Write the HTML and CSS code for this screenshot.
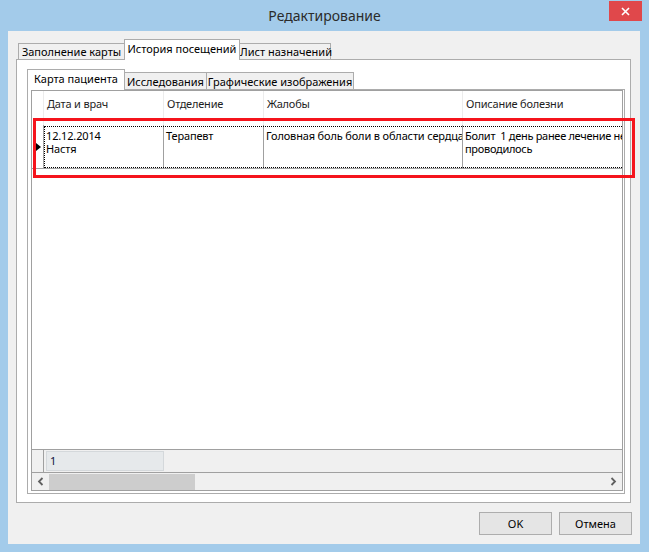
FILE: index.html
```html
<!DOCTYPE html>
<html lang="ru">
<head>
<meta charset="utf-8">
<title>Редактирование</title>
<link rel="stylesheet" href="styles.css">
</head>
<body>
<div class="window">
  <div class="titlebar">
    <span class="title">Редактирование</span>
    <div class="close">
      <svg width="9" height="9" viewBox="0 0 9 9"><path d="M1 1 L8 8 M8 1 L1 8" stroke="#fff" stroke-width="1.6" fill="none"/></svg>
    </div>
  </div>
  <div class="client">
    <div class="tabctl outer">
      <div class="tabstrip">
        <div class="tab t1">Заполнение карты</div>
        <div class="tab active t2">История посещений</div>
        <div class="tab t3">Лист назначений</div>
      </div>
      <div class="panel outer-panel">
        <div class="tabctl inner">
          <div class="tabstrip">
            <div class="tab active i1">Карта пациента</div>
            <div class="tab i2">Исследования</div>
            <div class="tab i3">Графические изображения</div>
          </div>
          <div class="panel inner-panel">
            <div class="grid">
              <div class="hrow">
                <div class="rh"></div>
                <div class="hc c1">Дата и врач</div>
                <div class="hc c2">Отделение</div>
                <div class="hc c3">Жалобы</div>
                <div class="hc c4">Описание болезни</div>
              </div>
              <div class="drow">
                <div class="rh"><span class="arrow"></span></div>
                <div class="cells">
                  <div class="dc c1">12.12.2014<br>Настя</div>
                  <div class="dc c2">Терапевт</div>
                  <div class="dc c3">Головная боль боли в области сердца</div>
                  <div class="dc c4"><span class="nw">Болит&nbsp; 1 день ранее лечение не</span><br>проводилось</div>
                </div>
              </div>
              <div class="gbody"></div>
              <div class="frow">
                <div class="rh"></div>
                <div class="fbox">1</div>
              </div>
              <div class="hscroll">
                <div class="sarrow">
                  <svg width="7" height="9" viewBox="0 0 7 9"><path d="M5.5 1 L2 4.5 L5.5 8" stroke="#606060" stroke-width="1.8" fill="none"/></svg>
                </div>
                <div class="thumb"></div>
                <div class="strack"></div>
                <div class="sarrow">
                  <svg width="7" height="9" viewBox="0 0 7 9"><path d="M1.5 1 L5 4.5 L1.5 8" stroke="#606060" stroke-width="1.8" fill="none"/></svg>
                </div>
              </div>
            </div>
          </div>
        </div>
      </div>
    </div>
    <div class="buttons">
      <div class="btn">OK</div>
      <div class="btn">Отмена</div>
    </div>
  </div>
  <div class="highlight"></div>
</div>
</body>
</html>
```

FILE: styles.css
```css
* { box-sizing: border-box; }

html, body {
  margin: 0;
  padding: 0;
}

body {
  font-family: "Noto Sans", "Segoe UI", sans-serif;
  font-size: 11px;
  color: #000;
  background: #a3cbea;
}

.window {
  width: 649px;
  height: 552px;
  background: #a3cbea;
  display: flex;
  flex-direction: column;
  position: relative;
  overflow: hidden;
}

.titlebar {
  height: 31px;
  display: grid;
  grid-template-columns: 1fr auto 1fr;
}

.title {
  grid-column: 2;
  font-size: 14px;
  color: #2b2b2b;
  line-height: 20px;
  padding-top: 6px;
}

.close {
  grid-column: 3;
  justify-self: end;
  align-self: start;
  margin-top: 1px;
  margin-right: 7px;
  width: 33px;
  height: 20px;
  background: #e0484b;
  display: flex;
  align-items: center;
  justify-content: center;
}

.client {
  flex: 1;
  margin: 0 9px 8px 8px;
  background: #f0f0f0;
  padding: 8px 8px 9px 8px;
  display: flex;
  flex-direction: column;
}

.tabctl {
  display: flex;
  flex-direction: column;
}

.tabctl.outer {
  height: 464px;
  margin-right: 1px;
}

.tabstrip {
  height: 20px;
  display: flex;
  align-items: flex-end;
  position: relative;
  z-index: 2;
}

.outer > .tabstrip { padding-left: 2px; }

.tab {
  border: 1px solid #acacac;
  border-bottom: none;
  background: #f0f0f0;
  text-align: center;
  white-space: nowrap;
  margin-left: -1px;
  color: #000;
}

.tab:first-child { margin-left: 0; }

.outer > .tabstrip > .tab {
  height: 16px;
  line-height: 16px;
}

.inner > .tabstrip > .tab {
  height: 17px;
  line-height: 17px;
}

.tabstrip > .tab.active {
  background: #fff;
  height: 21px;
  margin-bottom: -1px;
  line-height: 17px;
  position: relative;
  z-index: 3;
}

.t1 { width: 107px; }
.t2 { width: 116px; }
.t3 { width: 92px; }

.i1 { width: 98px; }
.i2 { width: 83px; }
.i3 { width: 148px; }

.panel {
  border: 1px solid #acacac;
  background: #fff;
  flex: 1;
  display: flex;
  flex-direction: column;
}

.outer-panel {
  padding: 9px 5px 8px 10px;
}

.tabctl.inner {
  flex: 1;
}

.inner-panel {
  padding: 0 1px 2px 3px;
}

.grid {
  flex: 1;
  border: 1px solid #a0a0a0;
  display: flex;
  flex-direction: column;
  overflow: hidden;
  background: #fff;
}

.rh {
  width: 12px;
  flex: none;
  border-right: 1px solid #a0a0a0;
}

.hrow {
  height: 34px;
  display: flex;
  flex: none;
}

.hrow .rh { border-right-color: #ececec; }

.hc {
  flex: none;
  padding: 5px 0 0 3px;
  line-height: 16px;
  border-right: 1px solid #ececec;
  white-space: nowrap;
  overflow: hidden;
  color: #1e1e1e;
  letter-spacing: -0.2px;
}

.c1 { width: 120px; }
.c2 { width: 100px; }
.c3 { width: 199px; }
.c4 { width: 200px; border-right: none; }

.drow {
  height: 44px;
  display: flex;
  flex: none;
  border-bottom: 1px solid #a0a0a0;
}

.drow .rh {
  display: flex;
  align-items: center;
  padding-left: 4px;
  padding-top: 1px;
}

.arrow {
  width: 0;
  height: 0;
  border-left: 5px solid #000;
  border-top: 4px solid transparent;
  border-bottom: 4px solid transparent;
}

.cells {
  display: flex;
  position: relative;
  flex: none;
}

.cells::after {
  content: "";
  position: absolute;
  top: 1px;
  left: 0;
  right: 0;
  bottom: 0;
  border: 1px dotted #000;
  border-right: none;
}

.dc {
  flex: none;
  padding: 4px 0 0 2px;
  line-height: 13px;
  border-right: 1px solid #a0a0a0;
  overflow: hidden;
  letter-spacing: -0.15px;
}

.dc.c3 { white-space: nowrap; }
.dc.c4 { border-right: none; width: 165px; letter-spacing: -0.3px; }
.nw { white-space: nowrap; }

.gbody {
  flex: 1;
  background: #fff;
}

.frow {
  height: 24px;
  flex: none;
  display: flex;
  background: #f0f0f0;
  border-top: 1px solid #a0a0a0;
  border-bottom: 1px solid #a0a0a0;
}

.fbox {
  width: 118px;
  height: 20px;
  margin: 1px 0 0 2px;
  background: #e6e9eb;
  border: 1px solid #d4d8db;
  padding-left: 3px;
  line-height: 18px;
  color: #101040;
}

.hscroll {
  height: 17px;
  flex: none;
  display: flex;
  background: #f0f0f0;
}

.sarrow {
  width: 17px;
  flex: none;
  display: flex;
  align-items: center;
  justify-content: center;
}

.thumb {
  width: 146px;
  flex: none;
  background: #cdcdcd;
  margin-top: 1px;
}

.strack { flex: 1; }

.buttons {
  margin-top: 9px;
  height: 23px;
  display: flex;
  justify-content: flex-end;
  gap: 7px;
}

.btn {
  width: 73px;
  height: 23px;
  border: 1px solid #adadad;
  background: #e5e5e5;
  text-align: center;
  line-height: 21px;
  color: #000;
}

.highlight {
  position: absolute;
  left: 33px;
  top: 118px;
  width: 602px;
  height: 60px;
  border: 3px solid #f5141c;
}
```
